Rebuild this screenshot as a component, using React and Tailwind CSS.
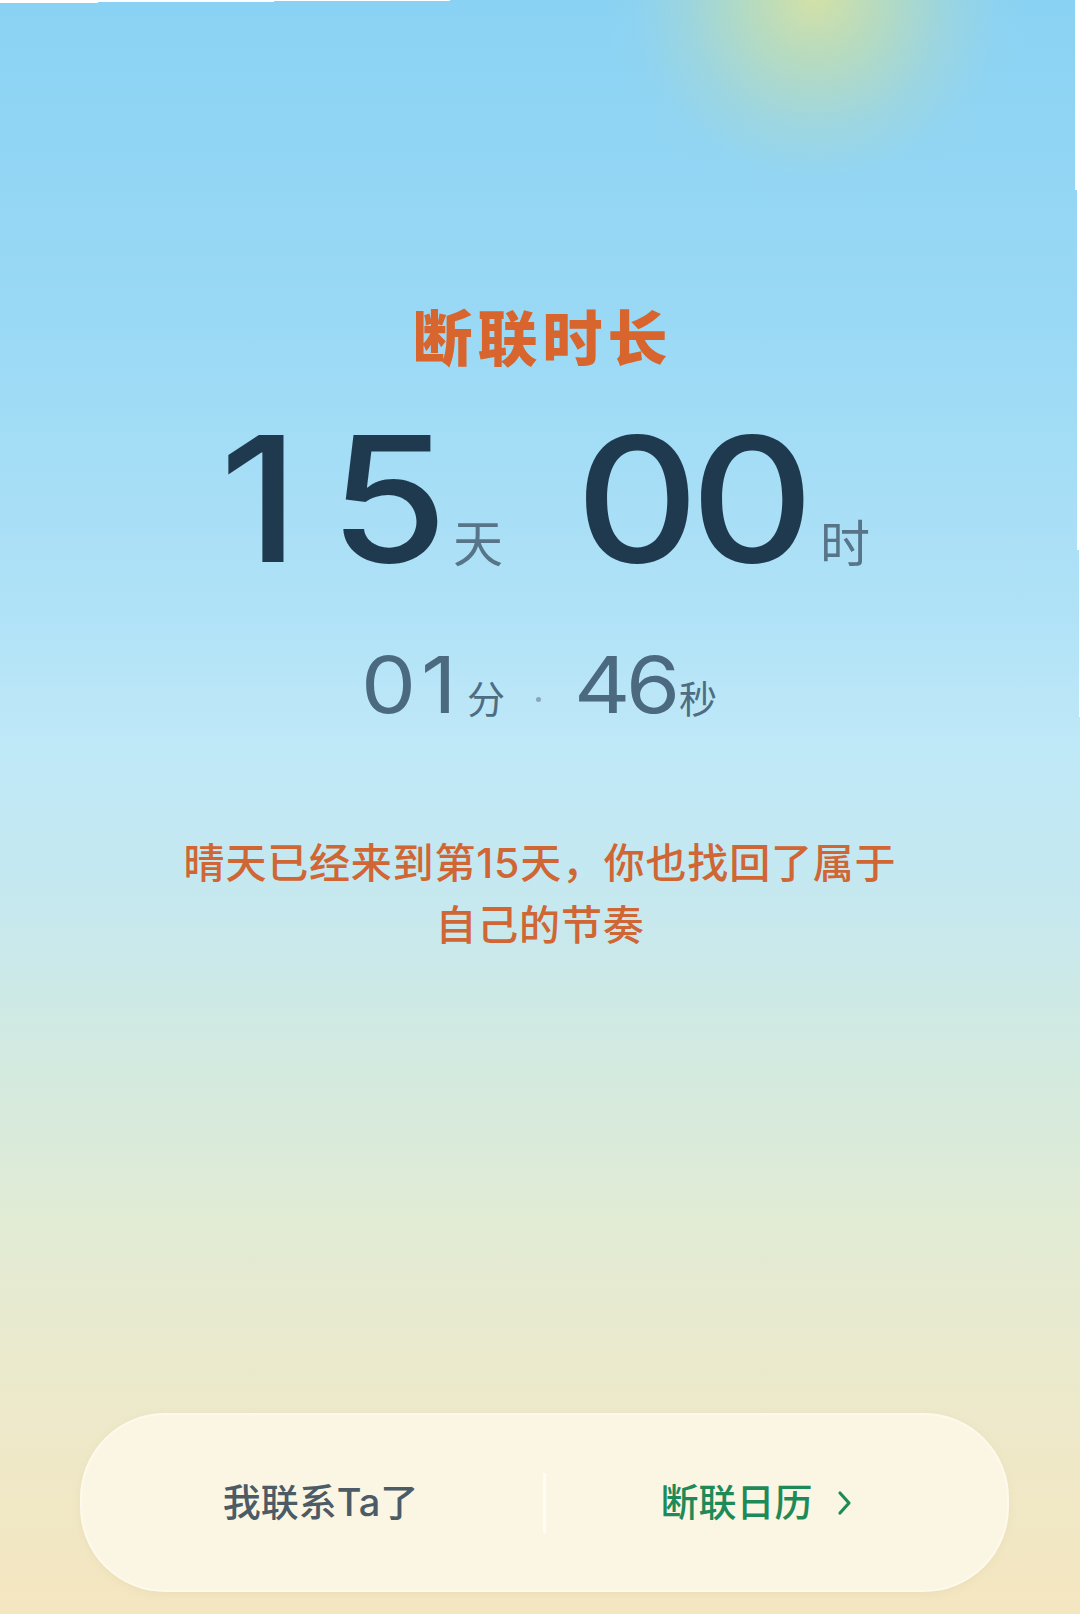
import React from "react";

const cjk = { fontFamily: 'Inter, "Noto Sans CJK SC", sans-serif' };
const num = { fontFamily: "Inter, sans-serif" };

function BigDigit({ ch, w }) {
  return (
    <span className={`inline-flex justify-center ${w}`}>
      <span className="inline-block scale-x-[1.1]" style={num}>{ch}</span>
    </span>
  );
}

function SmallDigit({ ch, w }) {
  return (
    <span className={`inline-flex justify-center ${w}`}>
      <span className="inline-block scale-x-[1.12]" style={num}>{ch}</span>
    </span>
  );
}

export default function App() {
  return (
    <div
      className="relative w-[1080px] h-[1614px] overflow-hidden flex flex-col"
      style={{
        background:
          "linear-gradient(180deg, #8ad2f3 0%, #9ad9f5 20%, #b0e2f7 38%, #bfe8f8 46%, #c6e8ef 56%, #d3eadf 66%, #e2ebd4 76%, #ece9cb 86%, #f4e6c0 100%)",
        fontFamily: 'Inter, "Noto Sans CJK SC", sans-serif',
      }}
    >
      {/* sun glow */}
      <div
        className="absolute left-[605px] top-[-215px] w-[420px] h-[420px] rounded-full pointer-events-none"
        style={{
          background:
            "radial-gradient(circle at 50% 50%, rgba(218,226,160,0.92) 0%, rgba(200,222,170,0.7) 22%, rgba(175,216,200,0.42) 45%, rgba(150,212,232,0.15) 62%, rgba(140,210,240,0) 76%)",
        }}
      />
      {/* edge artifacts */}
      <div className="absolute left-0 top-0 w-[98px] h-[3px] bg-white" />
      <div className="absolute left-[98px] top-0 w-[176px] h-[2px] bg-white" />
      <div className="absolute left-[274px] top-0 w-[176px] h-[1px] bg-white" />
      <div className="absolute right-0 top-0 w-[5px] h-[190px] bg-white" />
      <div className="absolute right-0 top-[190px] w-[3px] h-[360px] bg-white" />
      <div className="absolute right-0 top-[550px] w-[1px] h-[167px] bg-white" />

      <div className="relative flex flex-col items-center">
        <h1 className="mt-[303px] text-[60px] leading-[72px] font-black tracking-[5px] text-[#d8652e] pl-[5px]" style={cjk}>
          断联时长
        </h1>

        <div className="mt-[37px] flex items-baseline pl-[18px] text-[#1f3a4e] text-[174px] leading-[174px] font-medium">
          <BigDigit ch="1" w="w-[63px]" />
          <span className="w-[49px]" />
          <BigDigit ch="5" w="w-[97px]" />
          <span className="ml-[16px] w-[48px] text-[50px] leading-[50px] font-normal text-[#587489]" style={cjk}>天</span>
          <span className="w-[83px]" />
          <BigDigit ch="0" w="w-[107px]" />
          <span className="w-[7px]" />
          <BigDigit ch="0" w="w-[108px]" />
          <span className="ml-[14px] w-[50px] text-[50px] leading-[50px] font-normal text-[#587489]" style={cjk}>时</span>
        </div>

        <div className="mt-[60px] flex items-baseline text-[#4b6a80] text-[78px] leading-[78px] font-normal pl-[2px]">
          <SmallDigit ch="0" w="w-[47px]" />
          <span className="w-[8px]" />
          <SmallDigit ch="1" w="w-[38px]" />
          <span className="ml-[9px] text-[38px] leading-[38px] text-[#4f6d82]" style={cjk}>分</span>
          <span className="ml-[31px] mr-[38px] w-[5px] h-[5px] rounded-full bg-[#8aa7ba] self-center translate-y-[14px]" />
          <SmallDigit ch="4" w="w-[47px]" />
          <span className="w-[5px]" />
          <SmallDigit ch="6" w="w-[44px]" />
          <span className="ml-[4px] text-[38px] leading-[38px] text-[#4f6d82]" style={cjk}>秒</span>
        </div>

        <p className="mt-[108px] w-[800px] text-center text-[41px] leading-[62px] tracking-[0.8px] text-[#cf6634] font-medium" style={cjk}>
          晴天已经来到第15天，你也找回了属于
          <br />
          自己的节奏
        </p>
      </div>

      <div className="mt-auto mb-[22px] ml-[80px] w-[929px] h-[179px] rounded-[85px] bg-[#fbf6e3] border-2 border-[#fdf9ec] flex items-center shadow-[0_2px_6px_rgba(220,200,150,0.25)]">
        <div className="flex-1 flex justify-center">
          <span className="ml-[16px] text-[38px] text-[#4c5b65] font-medium" style={cjk}>我联系Ta了</span>
        </div>
        <div className="w-[3px] h-[60px] bg-[#fffcf2]" />
        <div className="flex-1 flex justify-center items-center">
          <div className="flex items-center mr-[40px]">
            <span className="text-[38px] text-[#1e8a58] font-medium" style={cjk}>断联日历</span>
            <svg className="ml-[24px]" width="16" height="28" viewBox="0 0 16 28" fill="none">
              <path d="M3 4 L12 14 L3 24" stroke="#1e8a58" strokeWidth="3.2" strokeLinecap="round" strokeLinejoin="round" />
            </svg>
          </div>
        </div>
      </div>
    </div>
  );
}
